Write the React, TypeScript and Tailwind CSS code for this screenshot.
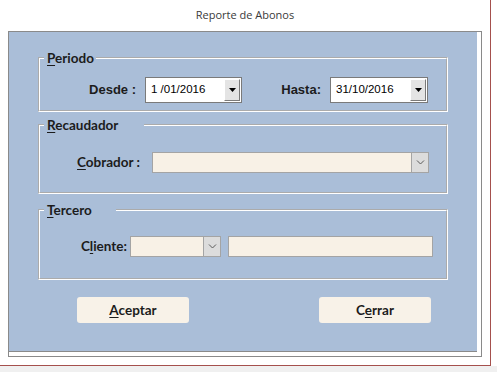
import React from "react";

const labelFont = "font-['Lato',sans-serif] font-bold text-[13.5px] text-[#1c1c1c]";
const dateFont = "font-['Liberation_Sans',Arial,sans-serif] text-[11.5px] text-black";

const DateBox = ({ value, width }: { value: string; width: string }) => {
  return (
    <div className={`${width} h-[26px] flex items-stretch bg-white border border-[#7a7a7a]`}>
      <div className={`flex-1 flex items-center pl-[5px] pb-[1px] ${dateFont}`}>{value}</div>
      <div className="w-[16px] my-[1px] mr-[1px] flex items-center justify-center bg-[#e4e4e4] border-t border-l border-t-white border-l-white border-r border-b border-r-[#7a7a7a] border-b-[#7a7a7a]">
        <svg width="7" height="4" viewBox="0 0 7 4">
          <polygon points="0,0 7,0 3.5,4" fill="#000" />
        </svg>
      </div>
    </div>
  );
};

const ComboBox = ({ width }: { width: string }) => {
  return (
    <div className={`${width} h-[21px] flex justify-end bg-[#f8f1e6] border border-[#a4a4a4]`}>
      <div className="w-[17px] h-full flex items-center justify-center bg-[#dcdcdc] border-l border-[#a4a4a4]">
        <svg width="9" height="5" viewBox="0 0 9 5">
          <polyline points="1,0.5 4.5,4 8,0.5" fill="none" stroke="#5a5a5a" strokeWidth="1" />
        </svg>
      </div>
    </div>
  );
};

const Group = ({
  title,
  legendWidth,
  children,
  className,
}: {
  title: React.ReactNode;
  legendWidth: string;
  children: React.ReactNode;
  className?: string;
}) => {
  return (
    <fieldset
      className={`w-[410px] border-2 border-white [--tw-border-style:groove] [border-style:groove] ${className ?? ""}`}
    >
      <legend className={`ml-1 pl-[3px] ${legendWidth} leading-[16px] ${labelFont}`}>{title}</legend>
      {children}
    </fieldset>
  );
};

export default function App() {
  return (
    <div className="w-[497px] h-[372px] bg-white flex flex-col overflow-hidden">
      <div className="flex h-[366px]">
        <div className="w-[491px] h-full flex flex-col bg-white border-r border-b border-[#a5504d]">
          <div className="h-[31px] flex items-center justify-center pb-[1px] font-['Open_Sans',sans-serif] text-[11px] text-[#3a3a3a]">
            Reporte de Abonos
          </div>
          <div className="ml-2 w-[474px] h-[326px] bg-white border border-[#8a8a8a] pr-[4px] pb-[4px]">
            <div className="h-full bg-[#aabed8] border-b border-[#8a8a8a] pl-[29px] pt-[18px] flex flex-col">
              <Group
                legendWidth="w-[52px]"
                title={
                  <>
                    <u className="underline-offset-2">P</u>eriodo
                  </>
                }
              >
                <div className="h-[44px] pt-[11px] flex items-start">
                  <div className="w-[96px] h-[26px] flex items-center justify-end font-['Liberation_Sans',Arial,sans-serif] font-bold text-[13px] text-[#1c1c1c]">
                    Desde :
                  </div>
                  <div className="ml-[9px]">
                    <DateBox value="1 /01/2016" width="w-[97px]" />
                  </div>
                  <div className="w-[79px] h-[26px] flex items-center justify-end font-['Liberation_Sans',Arial,sans-serif] font-bold text-[13px] text-[#1c1c1c]">
                    Hasta:
                  </div>
                  <div className="ml-[9px]">
                    <DateBox value="31/10/2016" width="w-[98px]" />
                  </div>
                </div>
              </Group>

              <Group
                className="mt-[5px]"
                legendWidth="w-[100px]"
                title={
                  <>
                    <u className="underline-offset-2">R</u>ecaudador
                  </>
                }
              >
                <div className="h-[59px] pt-[19px] flex items-start">
                  <div className={`w-[100px] h-[21px] flex items-center justify-end ${labelFont}`}>
                    <span>
                      <u className="underline-offset-2">C</u>obrador :
                    </span>
                  </div>
                  <div className="ml-[12px]">
                    <ComboBox width="w-[277px]" />
                  </div>
                </div>
              </Group>

              <Group
                className="mt-[8px]"
                legendWidth="w-[72px]"
                title={
                  <>
                    <u className="underline-offset-2">T</u>ercero
                  </>
                }
              >
                <div className="h-[60px] pt-[18px] flex items-start">
                  <div className={`w-[87px] h-[21px] flex items-center justify-end ${labelFont}`}>
                    <span>
                      C<u className="underline-offset-2">l</u>iente:
                    </span>
                  </div>
                  <div className="ml-[3px]">
                    <ComboBox width="w-[91px]" />
                  </div>
                  <div className="ml-[7px] w-[205px] h-[21px] bg-[#f8f1e6] border border-[#a4a4a4]" />
                </div>
              </Group>

              <div className="mt-[17px] flex">
                <button className={`ml-[39px] w-[112px] h-[26px] rounded-[3px] bg-[#f8f2e8] ${labelFont}`}>
                  <u className="underline-offset-2">A</u>ceptar
                </button>
                <button className={`ml-[130px] w-[112px] h-[26px] rounded-[3px] bg-[#f8f2e8] ${labelFont}`}>
                  C<u className="underline-offset-2">e</u>rrar
                </button>
              </div>
            </div>
          </div>
        </div>
        <div className="flex-1 bg-white" />
      </div>
      <div className="flex-1 bg-[#f0f0f0]" />
    </div>
  );
}
